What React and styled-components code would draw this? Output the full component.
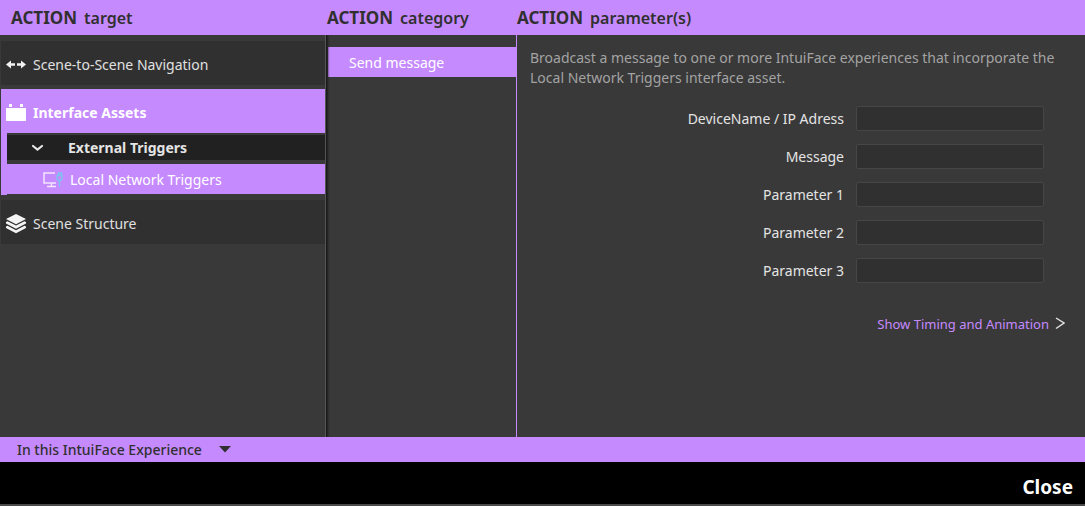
import React from "react";
import styled, { createGlobalStyle } from "styled-components";

const purple = "#c68aff";
const columns = "327px 190px minmax(0, 1fr)";

const GlobalStyle = createGlobalStyle`
  *, *::before, *::after { box-sizing: border-box; }
  body {
    margin: 0;
    background: #393939;
    color: #e4e4e4;
    font: 14px/20px "Segoe UI", "Noto Sans", sans-serif;
  }
  h2, p { margin: 0; }
  button, input, select {
    margin: 0;
    border: 0;
    color: inherit;
    font: inherit;
  }
`;

const Page = styled.div`
  display: flex;
  flex-direction: column;
  min-height: 100vh;
`;

const Header = styled.header`
  display: grid;
  grid-template-columns: ${columns};
  height: 35px;
  align-items: center;
  background: ${purple};
  color: #303030;
`;

const Heading = styled.h2`
  display: flex;
  align-items: baseline;
  gap: 7px;
  padding-left: ${(p) => (p.$inset ? "11px" : "0")};
  font-size: 16px;
  line-height: 24px;
  font-weight: 600;
  white-space: nowrap;

  b {
    font-size: 17px;
    font-weight: 700;
  }
`;

const Body = styled.main`
  display: grid;
  flex: 1;
  grid-template-columns: ${columns};
`;

const Targets = styled.nav`
  display: flex;
  flex-direction: column;
  gap: 4px;
  padding: 6px 0 0 1px;
  border-right: 1px solid #1a1a1a;
  box-shadow: inset -1px 0 #555555, 1px 0 2px #1c1c1c;
  clip-path: inset(0 -3px 0 0);
`;

const TargetButton = styled.button`
  display: flex;
  align-items: center;
  gap: 7px;
  width: calc(100% - 1px);
  height: 44px;
  padding: 3px 5px 0;
  background: ${(p) => (p.$active ? purple : "#303030")};
  color: ${(p) => (p.$active ? "#ffffff" : "#e0e0e0")};
  font-weight: ${(p) => (p.$active ? 700 : 400)};
  text-align: left;

  svg { flex: none; }
`;

const AssetList = styled.div`
  display: flex;
  flex-direction: column;
  gap: 4px;
  margin: 0 1px 1px 0;
  padding: 2px 0 1px;
  border-left: 6px solid ${purple};
`;

const AssetGroup = styled.button`
  display: flex;
  align-items: center;
  gap: 24px;
  height: 25px;
  padding: 0 24px;
  background: #212121;
  font-weight: 700;
`;

const AssetItem = styled.button`
  display: flex;
  align-items: center;
  gap: 7px;
  height: 30px;
  padding: 2px 36px 0;
  background: ${purple};
  color: #ffffff;
`;

const Categories = styled.nav`
  padding: 12px 0 0 1px;
  border-right: 1px solid ${purple};
`;

const CategoryButton = styled.button`
  width: 100%;
  height: 30px;
  padding: 2px 21px 0;
  background: ${purple};
  color: #ffffff;
  text-align: left;
`;

const Parameters = styled.section`
  padding: 13px 20px 20px 13px;
`;

const Description = styled.p`
  color: #a3a3a3;
`;

const Form = styled.form`
  display: flex;
  flex-direction: column;
  gap: 13px;
  padding: 18px 21px 0 0;
`;

const Field = styled.label`
  display: grid;
  grid-template-columns: minmax(0, 1fr) 188px;
  align-items: center;
  gap: 12px;
  text-align: right;
`;

const TextInput = styled.input`
  width: 100%;
  height: 25px;
  padding: 0 6px;
  border: 1px solid #464646;
  border-radius: 2px;
  background: #303030;
`;

const TimingLink = styled.a`
  display: flex;
  align-items: center;
  justify-content: flex-end;
  gap: 6px;
  margin-top: 31px;
  color: ${purple};
  font-size: 13px;
  text-decoration: none;
`;

const ScopeBar = styled.div`
  display: flex;
  height: 25px;
  align-items: center;
  padding-left: 17px;
  background: ${purple};
  color: #303030;
`;

const ScopeBox = styled.div`
  display: grid;
  align-items: center;

  > * { grid-area: 1 / 1; }
  > svg { justify-self: end; pointer-events: none; }
`;

const ScopeSelect = styled.select`
  appearance: none;
  width: 214px;
  height: 25px;
  padding: 0;
  background: transparent;
  font-weight: 500;
`;

const Footer = styled.footer`
  display: flex;
  height: 44px;
  align-items: center;
  justify-content: flex-end;
  padding: 7px 12px 0;
  border-bottom: 2px solid #4a4a4a;
  background: #000000;
`;

const CloseButton = styled.button`
  padding: 0;
  background: transparent;
  color: #ffffff;
  font-size: 19px;
  line-height: 24px;
  font-weight: 700;
`;

const ArrowsIcon = () => (
  <svg width="20" height="12" viewBox="0 0 20 12" fill="#f2f2f2" aria-hidden="true">
    <path d="M0 5.500 5 1.500v2.700h4v2.600H5v2.700zM20 5.500l-5-4v2.700h-4v2.600h4v2.700z" />
  </svg>
);

const BrickIcon = () => (
  <svg width="20" height="20" viewBox="0 0 20 20" fill="#ffffff" aria-hidden="true">
    <path d="M0 5h20v13H0zM3 1h3v3H3zM14 1h3v3h-3z" />
  </svg>
);

const LayersIcon = () => (
  <svg width="20" height="20" viewBox="0 0 20 20" fill="#f4f4f4" aria-hidden="true">
    <path d="m10 0 10 5-10 5.2L0 5z" />
    <path d="m0 8 1.500-.8L10 11.600l8.500-4.400L20 8v1.500l-10 5.200L0 9.500z" />
    <path d="m0 12.600 1.500-.8 8.500 4.500 8.500-4.500 1.500.8v1.400l-10 5.200L0 14z" />
  </svg>
);

const ChevronIcon = () => (
  <svg width="13" height="9" viewBox="0 0 13 9" fill="none" aria-hidden="true">
    <path d="m2 3 4.500 3.500L11 3" stroke="#e8e8e8" strokeWidth="2.200" strokeLinecap="round" />
  </svg>
);

const NetworkIcon = () => (
  <svg width="20" height="18" viewBox="0 0 20 18" fill="none" aria-hidden="true">
    <path d="M12 2H1v10h12M8.500 12v3M4 15.500h9" stroke="#f3e4ff" strokeWidth="1.500" />
    <path d="M15.500 4V2h3v2M14 4.500h5v3l-1.500 2h-2L14 7.500zM16.500 9.500V16" stroke="#7cc4ee" strokeWidth="1.400" />
  </svg>
);

const NextIcon = () => (
  <svg width="10" height="14" viewBox="0 0 10 14" fill="none" aria-hidden="true">
    <path d="m1 1 8 5-8 5.500" stroke="#e4e4e4" strokeWidth="1.400" />
  </svg>
);

const CaretIcon = () => (
  <svg width="12" height="7" viewBox="0 0 12 7" aria-hidden="true">
    <path d="M0 0h12L6 6.500z" fill="#303030" />
  </svg>
);

const headings = ["target", "category", "parameter(s)"];

const fields = [
  "DeviceName / IP Adress",
  "Message",
  "Parameter 1",
  "Parameter 2",
  "Parameter 3",
];

export default function App() {
  return (
    <>
      <GlobalStyle />
      <Page>
        <Header>
          {headings.map((name, index) => (
            <Heading key={name} $inset={index === 0}>
              <b>ACTION</b>
              <span>{name}</span>
            </Heading>
          ))}
        </Header>
        <Body>
          <Targets>
            <TargetButton type="button">
              <ArrowsIcon />
              Scene-to-Scene Navigation
            </TargetButton>
            <div>
              <TargetButton type="button" $active>
                <BrickIcon />
                Interface Assets
              </TargetButton>
              <AssetList>
                <AssetGroup type="button" aria-expanded="true">
                  <ChevronIcon />
                  External Triggers
                </AssetGroup>
                <AssetItem type="button">
                  <NetworkIcon />
                  Local Network Triggers
                </AssetItem>
              </AssetList>
            </div>
            <TargetButton type="button">
              <LayersIcon />
              Scene Structure
            </TargetButton>
          </Targets>
          <Categories>
            <CategoryButton type="button">Send message</CategoryButton>
          </Categories>
          <Parameters>
            <Description>
              Broadcast a message to one or more IntuiFace experiences that incorporate the Local
              Network Triggers interface asset.
            </Description>
            <Form>
              {fields.map((name) => (
                <Field key={name}>
                  <span>{name}</span>
                  <TextInput type="text" />
                </Field>
              ))}
            </Form>
            <TimingLink href="#timing">
              Show Timing and Animation
              <NextIcon />
            </TimingLink>
          </Parameters>
        </Body>
        <ScopeBar>
          <ScopeBox>
            <ScopeSelect aria-label="Scope">
              <option>In this IntuiFace Experience</option>
            </ScopeSelect>
            <CaretIcon />
          </ScopeBox>
        </ScopeBar>
        <Footer>
          <CloseButton type="button">Close</CloseButton>
        </Footer>
      </Page>
    </>
  );
}
